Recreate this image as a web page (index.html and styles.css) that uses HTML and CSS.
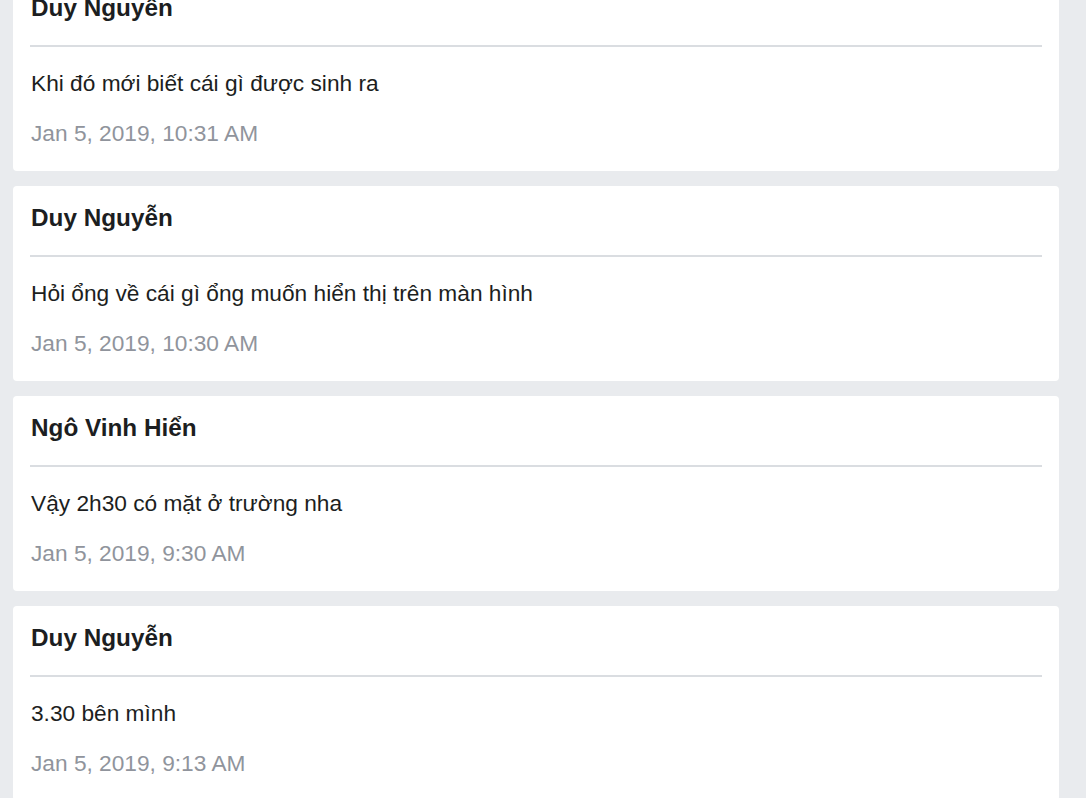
FILE: index.html
```html
<!DOCTYPE html>
<html lang="vi">
<head>
<meta charset="utf-8">
<title>Messages</title>
<link rel="stylesheet" href="styles.css">
</head>
<body>
<main class="feed">
  <article class="card">
    <h3 class="author">Duy Nguyễn</h3>
    <hr class="divider">
    <p class="message">Khi đó mới biết cái gì được sinh ra</p>
    <p class="date">Jan 5, 2019, 10:31 AM</p>
  </article>
  <article class="card">
    <h3 class="author">Duy Nguyễn</h3>
    <hr class="divider">
    <p class="message">Hỏi ổng về cái gì ổng muốn hiển thị trên màn hình</p>
    <p class="date">Jan 5, 2019, 10:30 AM</p>
  </article>
  <article class="card">
    <h3 class="author">Ngô Vinh Hiển</h3>
    <hr class="divider">
    <p class="message">Vậy 2h30 có mặt ở trường nha</p>
    <p class="date">Jan 5, 2019, 9:30 AM</p>
  </article>
  <article class="card">
    <h3 class="author">Duy Nguyễn</h3>
    <hr class="divider">
    <p class="message">3.30 bên mình</p>
    <p class="date">Jan 5, 2019, 9:13 AM</p>
  </article>
</main>
</body>
</html>
```
FILE: styles.css
```css
html, body {
  margin: 0;
  padding: 0;
  background: #e9ebee;
  font-family: "Liberation Sans", Arial, sans-serif;
  overflow: hidden;
}
.feed {
  display: flex;
  flex-direction: column;
  gap: 15px;
  margin: -24px 27px 0 13px;
}
.card {
  background: #ffffff;
  border-radius: 4px;
  padding: 18px 17px 25px;
}
.author {
  margin: 0;
  font-size: 24.3px;
  line-height: 28px;
  font-weight: 700;
  color: #1c1e21;
  padding-left: 1px;
}
.divider {
  margin: 23px 0 0;
  height: 2px;
  border: none;
  background: #dadde1;
}
.message {
  margin: 23px 0 0;
  font-size: 22.7px;
  line-height: 26px;
  color: #1c1e21;
  padding-left: 1px;
}
.date {
  margin: 24px 0 0;
  font-size: 22.7px;
  line-height: 26px;
  color: #90949c;
  padding-left: 1px;
}
```
